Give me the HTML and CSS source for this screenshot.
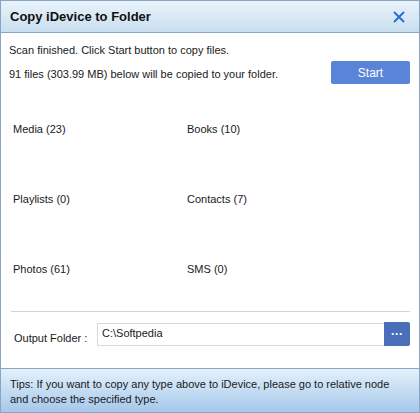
FILE: index.html
```html
<!DOCTYPE html>
<html lang="en">
<head>
    <meta charset="UTF-8">
    <title>Copy iDevice to Folder</title>
    <link rel="stylesheet" href="styles.css">
</head>
<body>
    <div class="window">
        <div class="titlebar">
            <h1>Copy iDevice to Folder</h1>
            <svg class="close" viewBox="0 0 12 12" width="12" height="12">
                <path d="M1,1 L11,11 M11,1 L1,11" stroke="#2b6fd2" stroke-width="2" fill="none"/>
            </svg>
        </div>

        <div class="content">
            <p class="status">Scan finished. Click Start button to copy files.</p>
            <div class="summary">
                <p>91 files (303.99 MB) below will be copied to your folder.</p>
                <button class="start">Start</button>
            </div>

            <div class="types">
                <div>Media (23)</div>
                <div>Books (10)</div>
                <div>Playlists (0)</div>
                <div>Contacts (7)</div>
                <div>Photos (61)</div>
                <div>SMS (0)</div>
            </div>

            <div class="output">
                <label>Output Folder :</label>
                <div class="path">C:\Softpedia</div>
                <button class="browse">&middot;&middot;&middot;</button>
            </div>
        </div>

        <div class="tips">
            Tips: If you want to copy any type above to iDevice, please go to relative node and choose the specified type.
        </div>
    </div>
</body>
</html>
```

FILE: styles.css
```css
body {
    margin: 0;
    font-family: 'Liberation Sans', Arial, sans-serif;
    font-size: 11px;
    color: #1a1a1a;
    background: #fff;
}

.window {
    width: 420px;
    height: 413px;
    box-sizing: border-box;
    border: 1px solid #8aa4c4;
    display: flex;
    flex-direction: column;
}

.titlebar {
    height: 31px;
    border-bottom: 1px solid #8aa4c4;
    background: linear-gradient(to bottom, #eaf3fb, #c8deef);
    display: flex;
    align-items: center;
    justify-content: space-between;
    padding: 0 14px 0 9px;
}

.titlebar h1 {
    margin: 0;
    font-size: 13px;
    font-weight: bold;
    color: #111;
}

.content {
    flex: 1;
    padding: 10px 9px 0 7px;
}

.status {
    margin: 0 0 0 1px;
    line-height: 14px;
}

.summary {
    display: flex;
    align-items: center;
    justify-content: space-between;
    margin-top: 4px;
}

.summary p {
    margin: 2px 0 0 1px;
}

.start {
    width: 79px;
    height: 23px;
    border: none;
    border-radius: 2px;
    background: #5a84d8;
    color: #fff;
    font-family: inherit;
    font-size: 12px;
    padding: 0;
}

.types {
    display: grid;
    grid-template-columns: 174px 1fr;
    grid-auto-rows: 70px;
    padding: 39px 0 0 5px;
    height: 223px;
    box-sizing: border-box;
}

.output {
    margin-top: 4px;
    border-top: 1px solid #d4d4d4;
    margin-left: 3px;
    padding-top: 10px;
    display: flex;
    align-items: center;
}

.output label {
    width: 83px;
    padding: 8px 0 0 3px;
}

.path {
    flex: 1;
    height: 23px;
    box-sizing: border-box;
    border: 1px solid #d9d9d9;
    border-right: none;
    padding: 3px 0 0 4px;
}

.browse {
    width: 26px;
    height: 24px;
    border: none;
    border-radius: 0 2px 2px 0;
    background: #4a6fba;
    color: #fff;
    font-size: 12px;
    font-weight: bold;
    padding: 0;
    line-height: 10px;
}

.tips {
    margin-top: auto;
    height: 44px;
    box-sizing: border-box;
    border-top: 1px solid #8aa4c4;
    background: linear-gradient(to bottom, #e3f1fb, #a6c8ea);
    padding: 8px 9px 0;
    line-height: 15px;
}
```
